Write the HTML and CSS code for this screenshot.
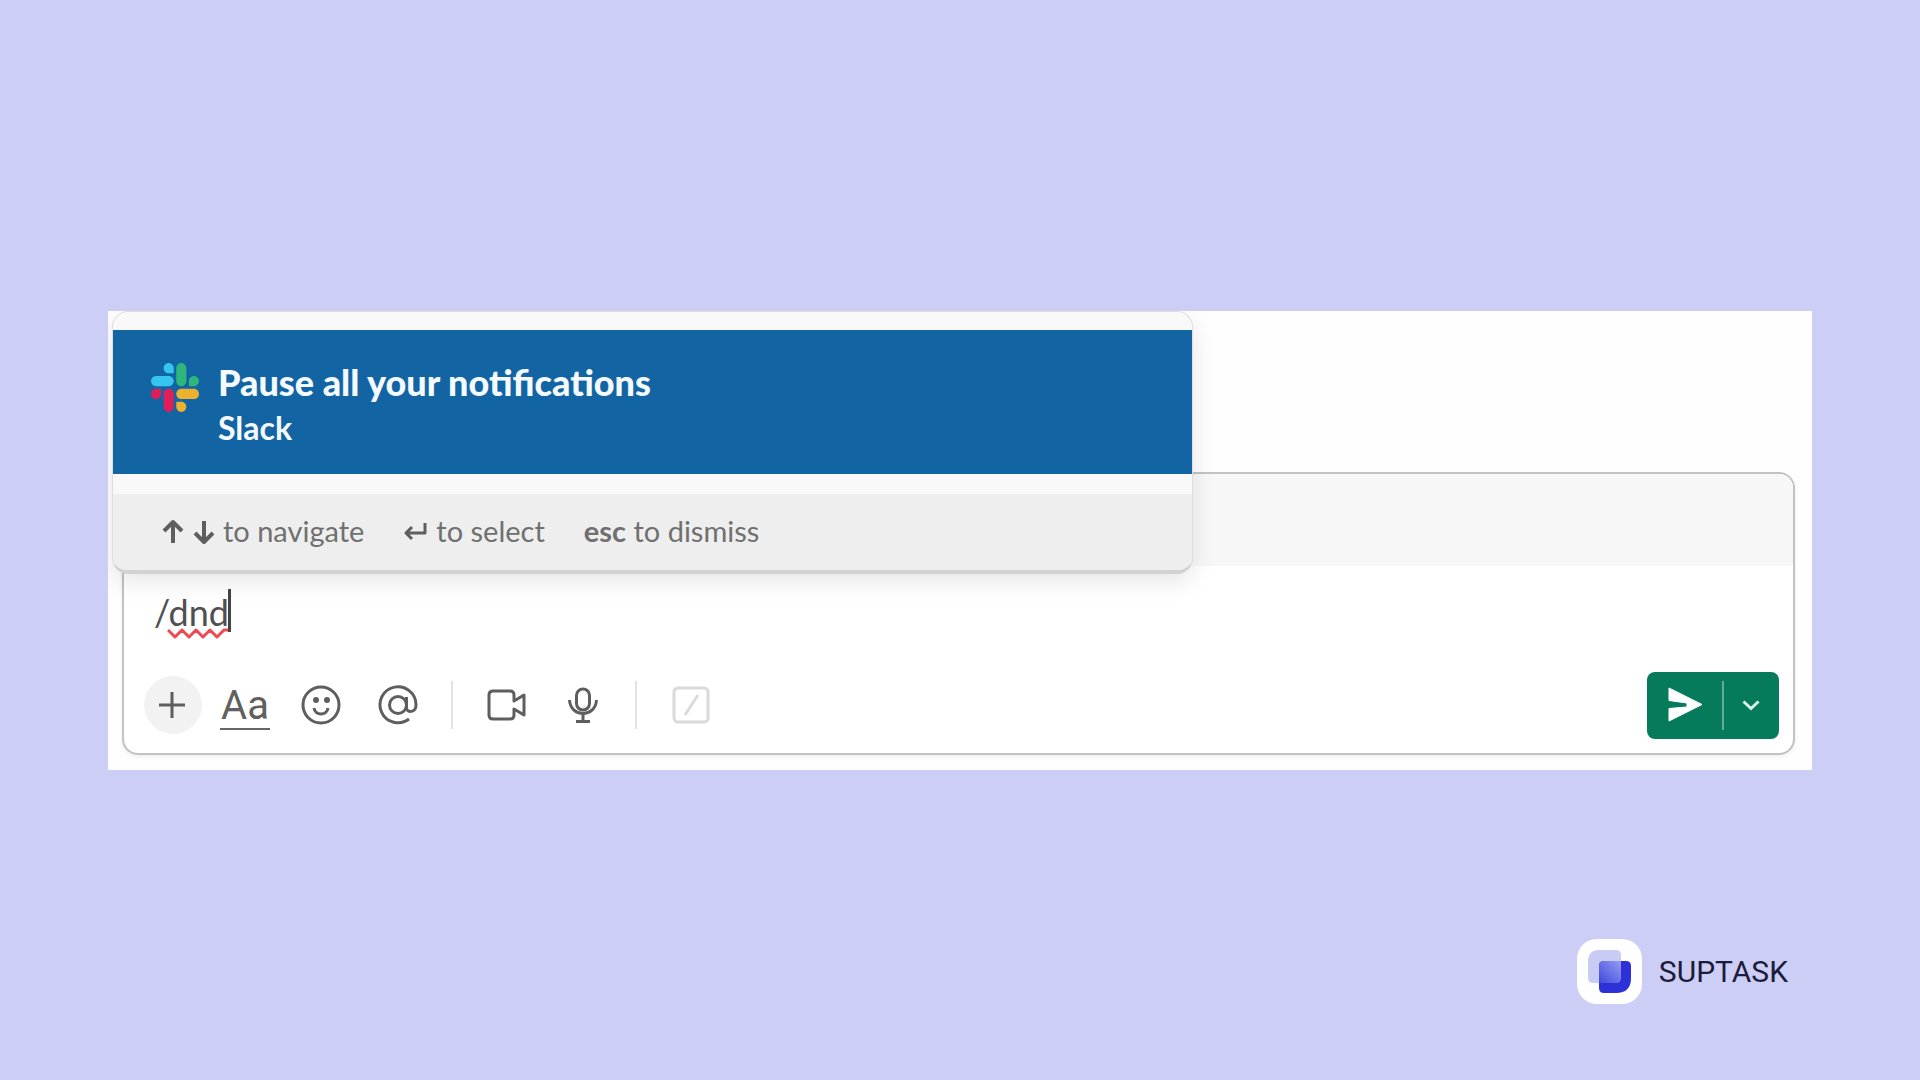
FILE: index.html
```html
<!DOCTYPE html>
<html lang="en">
<head>
<meta charset="utf-8">
<title>Pause notifications in Slack</title>
<link rel="stylesheet" href="styles.css">
</head>
<body>
<main class="shot">
  <form class="composer">
    <div class="format-bar"></div>
    <div class="field">
      <input class="message" type="text" value="/dnd" aria-label="Message" spellcheck="false">
      <svg class="squiggle" width="62" height="12" viewBox="0 0 62 12" aria-hidden="true"><path d="M1 2l7 7 7-7 7 7 7-7 7 7 7-7 7 7 7-7 4 0" fill="none" stroke="#ec4a50" stroke-width="3" stroke-linejoin="round"/></svg>
      <span class="caret"></span>
    </div>
    <div class="toolbar">
      <button class="tool add" type="button" aria-label="Attach"><svg width="28" height="28" viewBox="0 0 28 28"><path d="M13 1v26M0 14h26"/></svg></button>
      <button class="tool letters" type="button" aria-label="Formatting"><span>Aa</span></button>
      <button class="tool emoji" type="button" aria-label="Emoji"><svg width="40" height="40" viewBox="0 0 40 40"><circle cx="20" cy="20" r="18"/><circle class="dot" cx="15" cy="15" r="3"/><circle class="dot" cx="26" cy="15" r="3"/><path d="M13 23c1 8 13 8 14 0"/></svg></button>
      <button class="tool mention" type="button" aria-label="Mention"><svg width="40" height="40" viewBox="0 0 40 40"><circle cx="20" cy="20" r="8.500"/><path d="M28.500 12v11c0 5 9.500 5 9.500-3a18 18 0 1 0-7 14"/></svg></button>
      <span class="divider"></span>
      <button class="tool video" type="button" aria-label="Video clip"><svg width="40" height="40" viewBox="0 0 40 40"><path d="M6 6h17q4 0 4 4v6l10-6v20l-10-6v6q0 4-4 4H6q-4 0-4-4V10q0-4 4-4z"/></svg></button>
      <button class="tool mic" type="button" aria-label="Audio clip"><svg width="32" height="40" viewBox="0 0 32 40"><rect x="9.500" y="4" width="13" height="21" rx="6.500"/><path d="M2.500 15c1 18 26 18 27 0M16 29v7M9 36.500h14"/></svg></button>
      <span class="divider"></span>
      <button class="tool shortcut" type="button" aria-label="Shortcuts"><svg width="40" height="40" viewBox="0 0 40 40"><rect x="3" y="3" width="34" height="34" rx="4"/><path d="M14 30l13-20"/></svg></button>
      <div class="send-group">
        <button class="send" type="button" aria-label="Send"><svg width="36" height="36" viewBox="0 0 36 36"><path d="M2 1v12.500L20 16v4L2 21.500V34l33-16.500z" fill="#fff" stroke="#fff" stroke-linejoin="round"/></svg></button>
        <button class="send-more" type="button" aria-label="Schedule"><svg width="20" height="14" viewBox="0 0 20 14"><path d="M2.500 3.500l7.500 7 7.500-7" fill="none" stroke="#d8f2e8" stroke-width="3"/></svg></button>
      </div>
    </div>
  </form>

  <section class="popup">
    <a class="option" href="#">
      <svg class="slack" width="48" height="49" viewBox="0 0 122.800 122.800" preserveAspectRatio="none" aria-hidden="true">
        <path d="M25.800 77.600c0 7.100-5.800 12.900-12.900 12.900S0 84.700 0 77.600s5.800-12.900 12.900-12.900h12.900zM32.300 77.600c0-7.100 5.800-12.900 12.900-12.900s12.900 5.800 12.900 12.900v32.300c0 7.100-5.800 12.900-12.900 12.900s-12.900-5.800-12.900-12.900z" fill="#e01e5a"/>
        <path d="M45.200 25.800c-7.100 0-12.900-5.800-12.900-12.900S38.100 0 45.200 0s12.900 5.800 12.900 12.900v12.900zM45.200 32.300c7.100 0 12.900 5.800 12.900 12.900s-5.800 12.900-12.900 12.900H12.900C5.800 58.100 0 52.300 0 45.200s5.800-12.900 12.900-12.900z" fill="#36c5f0"/>
        <path d="M97 45.200c0-7.100 5.800-12.900 12.900-12.900s12.900 5.800 12.900 12.900-5.800 12.900-12.900 12.900H97zM90.500 45.200c0 7.100-5.800 12.900-12.900 12.900s-12.900-5.800-12.900-12.900V12.900C64.700 5.800 70.500 0 77.600 0s12.900 5.800 12.900 12.900z" fill="#2eb67d"/>
        <path d="M77.600 97c7.100 0 12.900 5.800 12.900 12.900s-5.800 12.900-12.900 12.900-12.900-5.800-12.900-12.900V97zM77.600 90.500c-7.100 0-12.900-5.800-12.900-12.900s5.800-12.900 12.900-12.900h32.300c7.100 0 12.900 5.800 12.900 12.900s-5.800 12.900-12.900 12.900z" fill="#ecb22e"/>
      </svg>
      <span class="option-text"><strong class="option-title">Pause all your notifications</strong><span class="option-app">Slack</span></span>
    </a>
    <div class="hints">
      <span class="hint"><svg width="52" height="26" viewBox="0 0 52 26" aria-hidden="true"><path d="M11 25V5M2 13l9-9 9 9M42 3v20M33 15l9 9 9-9" stroke-width="4"/></svg>to navigate</span>
      <span class="hint"><svg width="24" height="26" viewBox="0 0 24 26" aria-hidden="true"><path d="M22 5v10H3M9 9l-6 6 6 6" stroke-width="3"/></svg>to select</span>
      <span class="hint-key"><b>esc</b> to dismiss</span>
    </div>
  </section>
</main>

<footer class="brand">
  <svg width="65" height="65" viewBox="0 0 65 65" aria-hidden="true">
    <defs>
      <linearGradient id="overlap" x1="0" y1="1" x2="1" y2="0"><stop offset="0" stop-color="#3f4add"/><stop offset="1" stop-color="#949bf0"/></linearGradient>
    </defs>
    <rect width="65" height="65" rx="20" fill="#fff"/>
    <path d="M22 11h17q5 0 5 5v23q0 5-5 5H16q-5 0-5-5V23q0-12 11-12z" fill="#c8cbf4"/>
    <path d="M27 22h22q5 0 5 5v12q0 15-15 15H27q-5 0-5-5V27q0-5 5-5z" fill="#2c32d8"/>
    <path d="M27 22h17v17q0 5-5 5H22V27q0-5 5-5z" fill="url(#overlap)"/>
  </svg>
  <span>SUPTASK</span>
</footer>
</body>
</html>
```
FILE: styles.css
```css
* { box-sizing: border-box; }

body {
  margin: 0;
  min-height: 100vh;
  display: grid;
  grid-template-rows: 1fr auto 1fr;
  background: #cccef5;
  font-family: Lato, "Open Sans", sans-serif;
  color: #606060;
}

button {
  border: 0;
  padding: 0;
  background: none;
  font: inherit;
  color: inherit;
}

svg { display: block; flex: none; }

.shot {
  grid-row: 2;
  position: relative;
  margin: 0 108px;
  padding: 161px 17px 15px 14px;
  overflow: hidden;
  background: #fefefe;
}

.composer {
  border: 2px solid #c2c2c2;
  border-radius: 16px;
  overflow: hidden;
  background: #fff;
  box-shadow: 0 2px 4px rgba(0, 0, 0, 0.06);
}

.format-bar { height: 92px; background: #f7f7f7; }

.field {
  position: relative;
  padding: 22px 30px 0;
}

.message {
  display: block;
  width: 100%;
  height: 48px;
  border: 0;
  padding: 0;
  outline: 0;
  background: none;
  font: 36px/48px Lato, sans-serif;
  color: #505050;
}

.squiggle { position: absolute; left: 43px; top: 62px; }

.caret {
  position: absolute;
  left: 104px;
  top: 23px;
  width: 3px;
  height: 43px;
  background: #444;
}

.toolbar {
  display: flex;
  align-items: center;
  padding: 36px 14px 14px 20px;
}

.tool {
  display: flex;
  align-items: center;
  justify-content: center;
  height: 58px;
}

.tool svg, .hint svg {
  fill: none;
  stroke: #5e5e5e;
  stroke-width: 3;
  stroke-linejoin: round;
}

.tool .dot { fill: #5e5e5e; stroke: none; }

.add { width: 58px; border-radius: 50%; background: #f2f2f2; }

.letters { width: 50px; margin: 0 1px 0 18px; }

.letters span {
  width: 50px;
  padding-top: 4px;
  border-bottom: 2px solid #666;
  font: 40px/44px Roboto, sans-serif;
}

.emoji { margin-left: 30px; }
.mention { margin-left: 37px; }
.divider { width: 2px; height: 48px; margin: 0 34px 0 33px; background: #e2e2e2; }
.mic { margin: 0 3px 0 40px; }
.shortcut svg { stroke: #dadada; }

.send-group {
  display: flex;
  margin-left: auto;
  border-radius: 8px;
  background: #057b5b;
}

.send, .send-more {
  display: flex;
  align-items: center;
  justify-content: center;
  height: 67px;
}

.send { width: 75px; }

.send-more { position: relative; width: 57px; }

.send-more::before {
  content: "";
  position: absolute;
  left: 0;
  top: 9px;
  bottom: 9px;
  width: 2px;
  background: #5fae98;
}

.popup {
  position: absolute;
  left: 4px;
  top: 0;
  width: 1081px;
  max-width: 100%;
  padding-top: 18px;
  border: 1px solid #dedede;
  border-bottom: 4px solid #d2d2d2;
  border-radius: 16px;
  overflow: hidden;
  background: #f8f9f8;
  box-shadow: 0 8px 24px rgba(0, 0, 0, 0.1);
}

.option {
  display: flex;
  gap: 19px;
  padding: 29px 38px 23px;
  background: #1264a3;
  color: #f4faff;
  text-decoration: none;
}

.slack { margin-top: 4px; }

.option-text {
  display: flex;
  flex-direction: column;
  font-weight: 700;
  line-height: 46px;
}

.option-title { font-size: 36px; }
.option-app { font-size: 32px; }

.hints {
  display: flex;
  align-items: center;
  gap: 39px;
  height: 76px;
  margin-top: 20px;
  padding: 0 49px 2px;
  background: #eee;
  font-size: 29px;
  color: #707070;
}

.hint { display: flex; align-items: center; gap: 9px; }

.brand {
  grid-row: 3;
  display: flex;
  align-items: center;
  align-self: end;
  justify-self: end;
  gap: 17px;
  margin: 0 132px 76px 0;
  font: 30px/40px Roboto, sans-serif;
  color: #1b1b3a;
}
```
